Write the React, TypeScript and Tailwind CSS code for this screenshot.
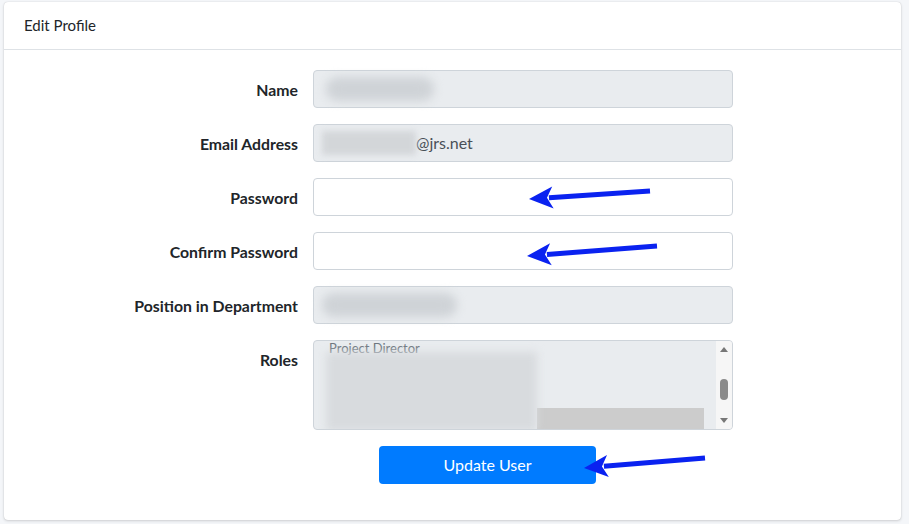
import React from "react";

const font = { fontFamily: "Lato, 'Open Sans', sans-serif" };

function Blur({ w }: { w: number }) {
  return (
    <div
      className="h-[24px] rounded-full bg-[#cfd3d7] blur-[5px]"
      style={{ width: w }}
    />
  );
}

function Row({
  label,
  children,
}: {
  label: string;
  children: React.ReactNode;
}) {
  return (
    <div className="flex items-start">
      <label className="w-[309px] pt-[8px] pr-[15px] text-right text-[15.8px] font-bold text-[#212529]">
        {label}
      </label>
      <div className="w-[420px]">{children}</div>
    </div>
  );
}

function Arrow({ x1, y1, x2, y2 }: { x1: number; y1: number; x2: number; y2: number }) {
  const ang = Math.atan2(y2 - y1, x2 - x1);
  const len = 24;
  const half = 11;
  const bx = x2 - Math.cos(ang) * len;
  const by = y2 - Math.sin(ang) * len;
  const px = -Math.sin(ang) * half;
  const py = Math.cos(ang) * half;
  return (
    <g>
      <line x1={x1} y1={y1} x2={bx + Math.cos(ang) * 4} y2={by + Math.sin(ang) * 4} stroke="#0a22f0" strokeWidth={5} />
      <polygon
        points={`${x2},${y2} ${bx + px},${by + py} ${bx + Math.cos(ang) * 6},${by + Math.sin(ang) * 6} ${bx - px},${by - py}`}
        fill="#0a22f0"
      />
    </g>
  );
}

export default function App() {
  return (
    <div className="relative min-h-[524px] bg-[#f4f6f9] px-[4px] pt-[2px]" style={font}>
      <div className="w-[897px] rounded-[4px] bg-white shadow-[0_0_1px_rgba(0,0,0,0.2),0_1px_3px_rgba(0,0,0,0.15)]">
        <div className="h-[48px] border-b border-[#dee2e6] px-[20px] pt-[12px] text-[15px] text-[#212529]">
          Edit Profile
        </div>
        <div className="flex flex-col gap-[16px] pt-[20px] pb-[36px]">
          <Row label="Name">
            <div className="flex h-[38px] items-center rounded-[4px] border border-[#ced4da] bg-[#e9ecef] px-[12px]">
              <Blur w={108} />
            </div>
          </Row>
          <Row label="Email Address">
            <div className="flex h-[38px] items-center rounded-[4px] border border-[#ced4da] bg-[#e9ecef] pl-[8px] text-[16px] text-[#495057]">
              <div className="h-[24px] w-[94px] bg-[#d3d6d9] blur-[3px]" />
              <span>@jrs.net</span>
            </div>
          </Row>
          <Row label="Password">
            <div className="h-[38px] rounded-[4px] border border-[#ced4da] bg-white" />
          </Row>
          <Row label="Confirm Password">
            <div className="h-[38px] rounded-[4px] border border-[#ced4da] bg-white" />
          </Row>
          <Row label="Position in Department">
            <div className="flex h-[38px] items-center rounded-[4px] border border-[#ced4da] bg-[#e9ecef] px-[8px]">
              <Blur w={135} />
            </div>
          </Row>
          <Row label="Roles">
            <div className="flex h-[90px] overflow-hidden rounded-[4px] border border-[#ced4da] bg-[#e9ecef]">
              <div className="relative flex-1 overflow-hidden pl-[12px] pr-[12px]">
                <div className="pl-[3px] text-[13px] leading-[14px] text-[#6c757d]">Project Director</div>
                <div className="flex">
                  <div className="mt-[-3px] h-[79px] w-[211px] bg-[#d8dbde] blur-[4px]" />
                  <div className="mt-[53px] h-[22px] flex-1 bg-[#cccccc]" />
                </div>
              </div>
              <div className="relative w-[16px] bg-[#f6f6f6]">
                <div className="absolute left-[4px] top-[6px] h-0 w-0 border-x-[4px] border-b-[5px] border-x-transparent border-b-[#777]" />
                <div className="absolute left-[4px] top-[38px] h-[21px] w-[8px] rounded-full bg-[#8a8a8a]" />
                <div className="absolute bottom-[6px] left-[4px] h-0 w-0 border-x-[4px] border-t-[5px] border-x-transparent border-t-[#777]" />
              </div>
            </div>
          </Row>
          <div className="pl-[375px]">
            <button className="h-[38px] w-[217px] rounded-[4px] bg-[#007bff] text-[16px] text-white">
              Update User
            </button>
          </div>
        </div>
      </div>
      <svg className="pointer-events-none absolute left-0 top-0" width={909} height={524}>
        <Arrow x1={650} y1={191} x2={529} y2={199} />
        <Arrow x1={657} y1={246} x2={527} y2={256} />
        <Arrow x1={705} y1={458} x2={584} y2={468} />
      </svg>
    </div>
  );
}
